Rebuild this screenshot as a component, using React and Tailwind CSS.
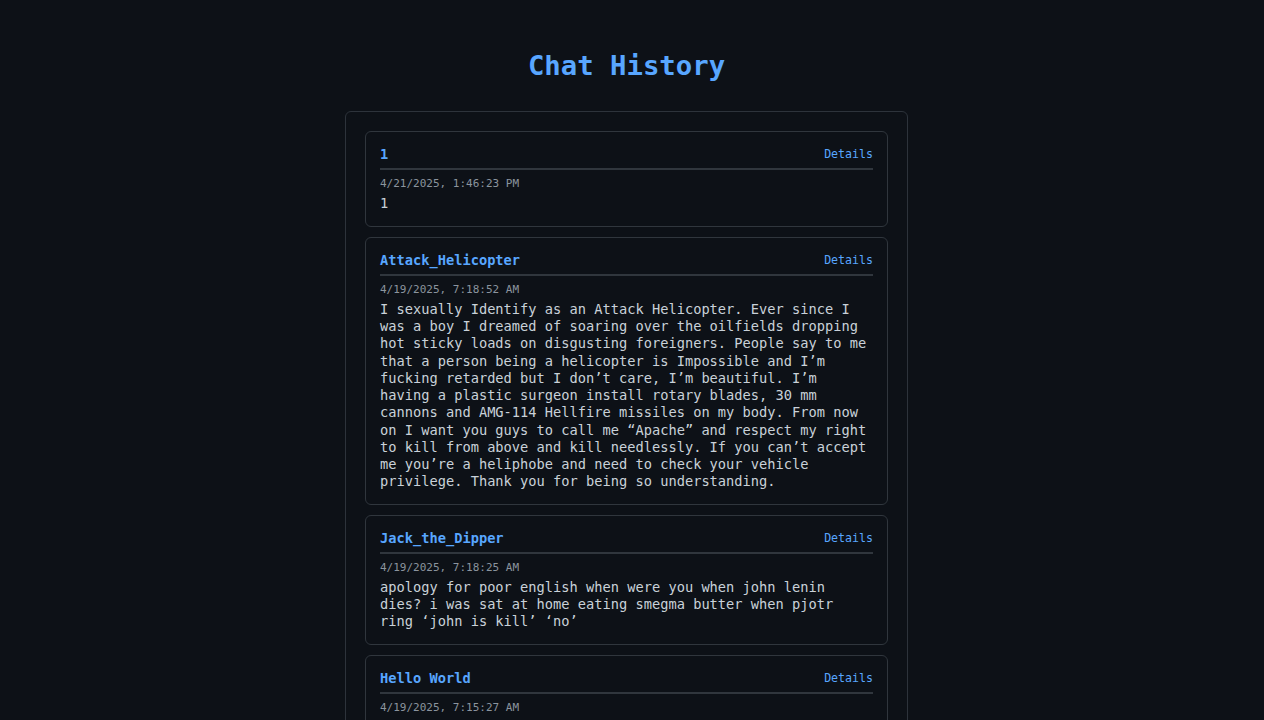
import React from "react";

const chats = [
  {
    id: 1,
    title: "1",
    time: "4/21/2025, 1:46:23 PM",
    text: "1",
  },
  {
    id: 2,
    title: "Attack_Helicopter",
    time: "4/19/2025, 7:18:52 AM",
    text: "I sexually Identify as an Attack Helicopter. Ever since I was a boy I dreamed of soaring over the oilfields dropping hot sticky loads on disgusting foreigners. People say to me that a person being a helicopter is Impossible and I’m fucking retarded but I don’t care, I’m beautiful. I’m having a plastic surgeon install rotary blades, 30 mm cannons and AMG-114 Hellfire missiles on my body. From now on I want you guys to call me “Apache” and respect my right to kill from above and kill needlessly. If you can’t accept me you’re a heliphobe and need to check your vehicle privilege. Thank you for being so understanding.",
  },
  {
    id: 3,
    title: "Jack_the_Dipper",
    time: "4/19/2025, 7:18:25 AM",
    text: "apology for poor english when were you when john lenin dies? i was sat at home eating smegma butter when pjotr ring ‘john is kill’ ‘no’",
  },
  {
    id: 4,
    title: "Hello World",
    time: "4/19/2025, 7:15:27 AM",
    text: "Hello World",
  },
];

function ChatCard({ chat }) {
  return (
    <div className="rounded-md border border-[#30363d] bg-[#0d1117] px-[14px] pt-[14px] pb-[13px]">
      <div className="flex items-center justify-between border-b-2 border-[#30363d] pb-[5px]">
        <div className="text-[13.7px] leading-[17.25px] font-bold text-[#58a6ff]">{chat.title}</div>
        <a href="#" className="text-[11.6px] leading-[17px] text-[#58a6ff]">
          Details
        </a>
      </div>
      <div className="mt-[7px] text-[11px] leading-[14px] text-[#8b949e]">{chat.time}</div>
      <div className="mt-1 text-[13.7px] leading-[17.25px] text-[#c9d1d9] break-words">{chat.text}</div>
    </div>
  );
}

export default function App() {
  return (
    <div
      className="min-h-screen bg-[#0d1117] pt-[41px] pr-[11px] pb-10"
      style={{ fontFamily: '"DejaVu Sans Mono", "Liberation Mono", monospace' }}
    >
      <h1 className="text-center text-[27.3px] leading-[50px] font-bold text-[#58a6ff]">Chat History</h1>
      <div className="mx-auto mt-[20px] w-[563px] rounded-md border border-[#2d333b] bg-[#0d1117] p-[19px]">
        <div className="flex flex-col gap-[10px]">
          {chats.map((c) => (
            <ChatCard key={c.id} chat={c} />
          ))}
        </div>
      </div>
    </div>
  );
}
